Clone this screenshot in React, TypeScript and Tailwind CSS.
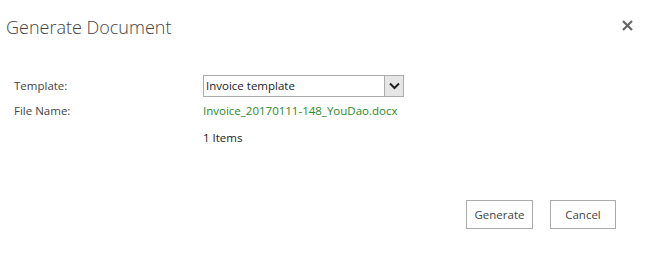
import React from 'react';

export default function App() {
  return (
    <div
      className="w-[645px] h-[267px] bg-white text-[#444] overflow-hidden"
      style={{ fontFamily: '"Open Sans", "Noto Sans", sans-serif' }}
    >
      <div className="flex items-start justify-between pl-[6px] pr-[8px] pt-[13px]">
        <h1 className="text-[18px] leading-[28px] font-light text-[#444]">Generate Document</h1>
        <button className="mt-[2px] w-[20px] h-[20px] flex items-center justify-center">
          <svg width="11" height="11" viewBox="0 0 11 11" fill="none">
            <path d="M1 1 L10 10 M10 1 L1 10" stroke="#666" strokeWidth="2.2" />
          </svg>
        </button>
      </div>

      <div className="mt-[34px] pl-[14px] text-[11.5px]">
        <div className="flex items-center h-[22px]">
          <div className="w-[189px]">Template:</div>
          <div className="flex w-[201px] h-[22px] border border-[#ababab] bg-white">
            <div className="flex-1 pl-[2px] leading-[20px] text-[#222]">Invoice template</div>
            <div className="w-[19px] h-[20px] bg-[#e6e6e6] border-l border-[#ababab] flex items-center justify-center">
              <svg width="11" height="8" viewBox="0 0 11 8" fill="none">
                <path d="M1 1.5 L5.5 6 L10 1.5" stroke="#222" strokeWidth="2" />
              </svg>
            </div>
          </div>
        </div>
        <div className="flex items-center h-[20px] mt-[4px]">
          <div className="w-[189px]">File Name:</div>
          <div className="text-[#2a8a2a]">Invoice_20170111-148_YouDao.docx</div>
        </div>
        <div className="flex items-center h-[20px] mt-[7px]">
          <div className="w-[189px]"></div>
          <div className="text-[#222]">1 Items</div>
        </div>
      </div>

      <div className="flex justify-end gap-[17px] pr-[29px] mt-[52px]">
        <button className="w-[67px] h-[29px] border border-[#ababab] bg-white text-[11.5px] text-[#444]">Generate</button>
        <button className="w-[66px] h-[29px] border border-[#ababab] bg-white text-[11.5px] text-[#444]">Cancel</button>
      </div>
    </div>
  );
}
